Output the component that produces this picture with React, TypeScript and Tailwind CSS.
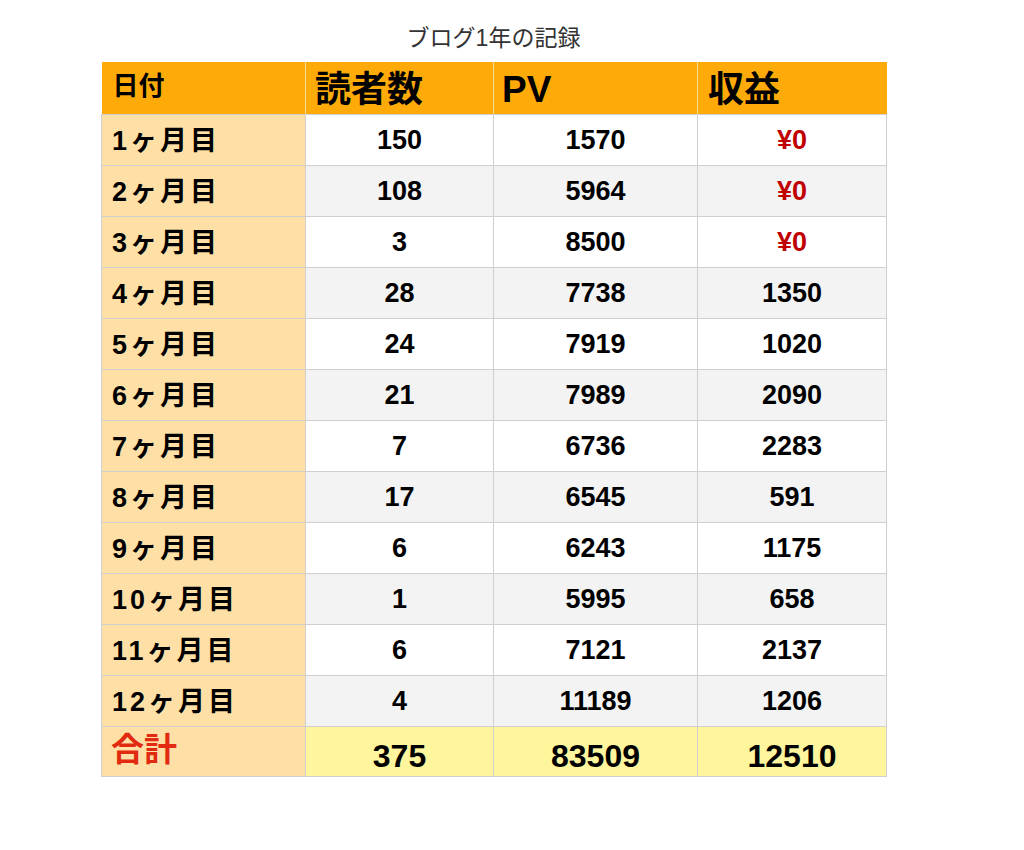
import React from 'react';

const rows: [string, string, string, string][] = [
  ['1ヶ月目', '150', '1570', '¥0'],
  ['2ヶ月目', '108', '5964', '¥0'],
  ['3ヶ月目', '3', '8500', '¥0'],
  ['4ヶ月目', '28', '7738', '1350'],
  ['5ヶ月目', '24', '7919', '1020'],
  ['6ヶ月目', '21', '7989', '2090'],
  ['7ヶ月目', '7', '6736', '2283'],
  ['8ヶ月目', '17', '6545', '591'],
  ['9ヶ月目', '6', '6243', '1175'],
  ['10ヶ月目', '1', '5995', '658'],
  ['11ヶ月目', '6', '7121', '2137'],
  ['12ヶ月目', '4', '11189', '1206'],
];

const font = { fontFamily: '"Liberation Sans", "Noto Sans CJK JP", sans-serif' };

export default function App() {
  return (
    <div className="w-[1024px] h-[850px] bg-white text-black" style={font}>
      <div className="pt-[24px] pl-[101px]">
        <div className="w-[785px] text-center text-[23px] leading-[28px] text-[#333] font-normal">
          ブログ1年の記録
        </div>
        <table className="mt-[10px] w-[785px] border-collapse table-fixed">
          <colgroup>
            <col className="w-[204px]" />
            <col className="w-[188px]" />
            <col className="w-[204px]" />
            <col className="w-[189px]" />
          </colgroup>
          <thead>
            <tr className="h-[52px] bg-[#feab0a]">
              <th className="border-r border-[#f6dc9a] pl-[11px] pb-[4px] text-left align-middle text-[26px] leading-[30px] font-bold">日付</th>
              <th className="border-r border-[#f6dc9a] pl-[9px] text-left align-middle pt-[4px] text-[36px] leading-[40px] font-bold">読者数</th>
              <th className="border-r border-[#f6dc9a] pl-[8px] text-left align-middle pt-[4px] text-[37px] leading-[40px] font-bold">PV</th>
              <th className="pl-[10px] text-left align-middle pt-[4px] text-[36px] leading-[40px] font-bold">収益</th>
            </tr>
          </thead>
          <tbody>
            {rows.map((r, i) => (
              <tr key={r[0]} className={`h-[51px] ${i % 2 === 0 ? 'bg-white' : 'bg-[#f3f3f3]'}`}>
                <td className="bg-[#fee0a6] border border-[#cfcfcf] pl-[10px] pt-[2px] text-[27px] leading-[32px] font-bold tracking-[3px]">
                  {r[0]}
                </td>
                <td className="border border-[#cfcfcf] text-center text-[27px] leading-[32px] font-bold">{r[1]}</td>
                <td className="border border-[#cfcfcf] text-center text-[27px] leading-[32px] font-bold">{r[2]}</td>
                <td
                  className={`border border-[#cfcfcf] text-center text-[27px] leading-[32px] font-bold ${
                    r[3] === '¥0' ? 'text-[#c00000]' : ''
                  }`}
                >
                  {r[3]}
                </td>
              </tr>
            ))}
            <tr className="h-[50px]">
              <td className="bg-[#fee0a6] border border-[#cfcfcf] pl-[9px] pb-[2px] text-[33px] leading-[38px] font-bold text-[#e22a10]">合計</td>
              <td className="bg-[#fff59c] border border-[#cfcfcf] text-center pt-[10px] text-[32px] leading-[36px] font-bold">375</td>
              <td className="bg-[#fff59c] border border-[#cfcfcf] text-center pt-[10px] text-[32px] leading-[36px] font-bold">83509</td>
              <td className="bg-[#fff59c] border border-[#cfcfcf] text-center pt-[10px] text-[32px] leading-[36px] font-bold">12510</td>
            </tr>
          </tbody>
        </table>
      </div>
    </div>
  );
}
